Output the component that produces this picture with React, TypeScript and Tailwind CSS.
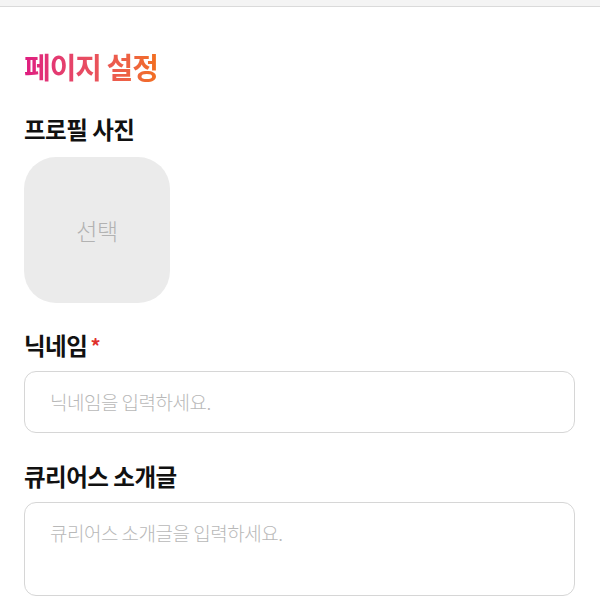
export default function App() {
  const font = { fontFamily: '"Noto Sans CJK KR", "Noto Sans", sans-serif' };
  return (
    <div className="w-[600px] h-[600px] bg-white overflow-hidden" style={font}>
      <div className="h-[7px] bg-[#f4f4f4] border-b border-[#dadada]" />
      <div className="px-6 flex flex-col">
        <h1 className="mt-[41px] text-[29px] leading-[36px] font-bold tracking-[-1px] bg-gradient-to-r from-[#df1a80] to-[#f26f1c] bg-clip-text text-transparent w-fit">
          페이지 설정
        </h1>
        <div className="mt-[31px] text-[23.5px] leading-[28px] font-bold tracking-[-0.5px] text-[#111]">
          프로필 사진
        </div>
        <button className="mt-[14px] w-[146px] h-[146px] rounded-[32px] bg-[#ebebeb] flex items-center justify-center text-[23px] font-light text-[#b2b2b2] tracking-[-0.5px]">
          선택
        </button>
        <div className="mt-[28px] text-[23.5px] leading-[28px] font-bold tracking-[-0.5px] text-[#111] flex items-start">
          <span>닉네임</span>
          <span className="text-[#e0302c] text-[20px] leading-[20px] ml-[3px] mt-[5px]">*</span>
        </div>
        <div className="mt-[12px] h-[62px] w-[551px] rounded-[12px] border border-[#d6d6d6] flex items-center px-[25px]">
          <span className="text-[19px] font-light text-[#b8b8b8] tracking-[-0.5px]">닉네임을 입력하세요.</span>
        </div>
        <div className="mt-[29px] text-[23.5px] leading-[28px] font-bold tracking-[-0.5px] text-[#111]">
          큐리어스 소개글
        </div>
        <div className="mt-[12px] h-[94px] w-[551px] rounded-[12px] border border-[#d6d6d6] px-[25px] pt-[16px]">
          <span className="text-[19px] font-light text-[#b8b8b8] tracking-[-0.5px]">큐리어스 소개글을 입력하세요.</span>
        </div>
      </div>
    </div>
  );
}
